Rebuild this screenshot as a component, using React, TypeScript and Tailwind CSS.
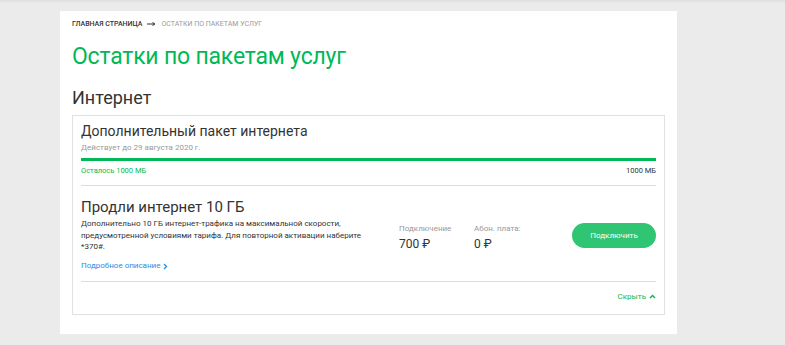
import React from 'react';

const font = { fontFamily: 'Roboto, "Liberation Sans", sans-serif' };

const ChevronRight: React.FC = () => (
  <svg width="5" height="7" viewBox="0 0 5 7" className="ml-[3px] mt-[1px]">
    <path d="M1 1l2.5 2.5L1 6" fill="none" stroke="#1e8fe6" strokeWidth="1.3" />
  </svg>
);

const ChevronUp: React.FC = () => (
  <svg width="7" height="5" viewBox="0 0 7 5" className="ml-[3px]">
    <path d="M1 4l2.5-2.5L6 4" fill="none" stroke="#00b956" strokeWidth="1.4" />
  </svg>
);

const App: React.FC = () => {
  return (
    <div className="w-[785px] h-[345px] bg-[#ebebeb] overflow-hidden" style={font}>
      <div className="h-[3px] bg-gradient-to-b from-[#dedede] to-[#ebebeb]" />
      <div className="ml-[60px] mt-[8px] w-[617px] h-[323px] bg-white px-3 pt-[8px]">
        {/* breadcrumbs */}
        <div className="flex items-center h-[10px] text-[7px] uppercase leading-[10px]">
          <span className="text-[#333] font-medium">Главная страница</span>
          <svg width="9" height="4" viewBox="0 0 9 4" className="mx-[5px]">
            <path d="M0 2h7M5.5 0.5L8 2 5.5 3.5" fill="none" stroke="#333" strokeWidth="1" />
          </svg>
          <span className="text-[#999]">Остатки по пакетам услуг</span>
        </div>

        <h1 className="mt-[12px] text-[23px] leading-[32px] tracking-[-0.2px] text-[#00b956]">Остатки по пакетам услуг</h1>
        <h2 className="mt-[13px] text-[18px] leading-[24px] text-[#333]">Интернет</h2>

        <div className="mt-[5px] border border-[#e1e1e1] px-[8px] h-[200px]">
          {/* package */}
          <div className="pt-[5px] pb-[9px] border-b border-[#dcdcdc]">
            <div className="text-[14px] leading-[20px] text-[#333]">Дополнительный пакет интернета</div>
            <div className="mt-[2px] text-[8px] leading-[10px] text-[#9a9a9a]">Действует до 29 августа 2020 г.</div>
            <div className="mt-[5px] h-[3px] bg-[#00b956]" />
            <div className="mt-[5px] flex justify-between text-[7.5px] leading-[10px]">
              <span className="text-[#00b956]">Осталось 1000 МБ</span>
              <span className="text-[#333]">1000 МБ</span>
            </div>
          </div>

          {/* offer */}
          <div className="pt-[11px] pb-[10px] border-b border-[#dcdcdc] flex">
            <div className="w-[300px]">
              <div className="text-[15px] leading-[20px] text-[#333]">Продли интернет 10 ГБ</div>
              <p className="mt-[1px] w-[290px] text-[8px] leading-[11.5px] text-[#333]">
                Дополнительно 10 ГБ интернет-трафика на максимальной скорости, предусмотренной условиями тарифа. Для повторной активации наберите *370#.
              </p>
              <div className="mt-[8px] flex items-center text-[8px] leading-[10px] text-[#1e8fe6]">
                Подробное описание
                <ChevronRight />
              </div>
            </div>
            <div className="flex items-start pt-[27px] ml-[18px]">
              <div className="w-[75px]">
                <div className="text-[8px] leading-[10px] text-[#999]">Подключение</div>
                <div className="mt-[3px] text-[12px] leading-[14px] text-[#333]">700 ₽</div>
              </div>
              <div className="w-[98px]">
                <div className="text-[8px] leading-[10px] text-[#999]">Абон. плата:</div>
                <div className="mt-[3px] text-[12px] leading-[14px] text-[#333]">0 ₽</div>
              </div>
            </div>
            <div className="flex-1 flex justify-end pt-[26px]">
              <button className="w-[84px] h-[25px] rounded-full bg-[#2fc573] text-white text-[8px]">Подключить</button>
            </div>
          </div>

          <div className="flex justify-end items-center pt-[10px] text-[8px] leading-[10px] text-[#00b956]">
            Скрыть
            <ChevronUp />
          </div>
        </div>
      </div>
    </div>
  );
};

export default App;
